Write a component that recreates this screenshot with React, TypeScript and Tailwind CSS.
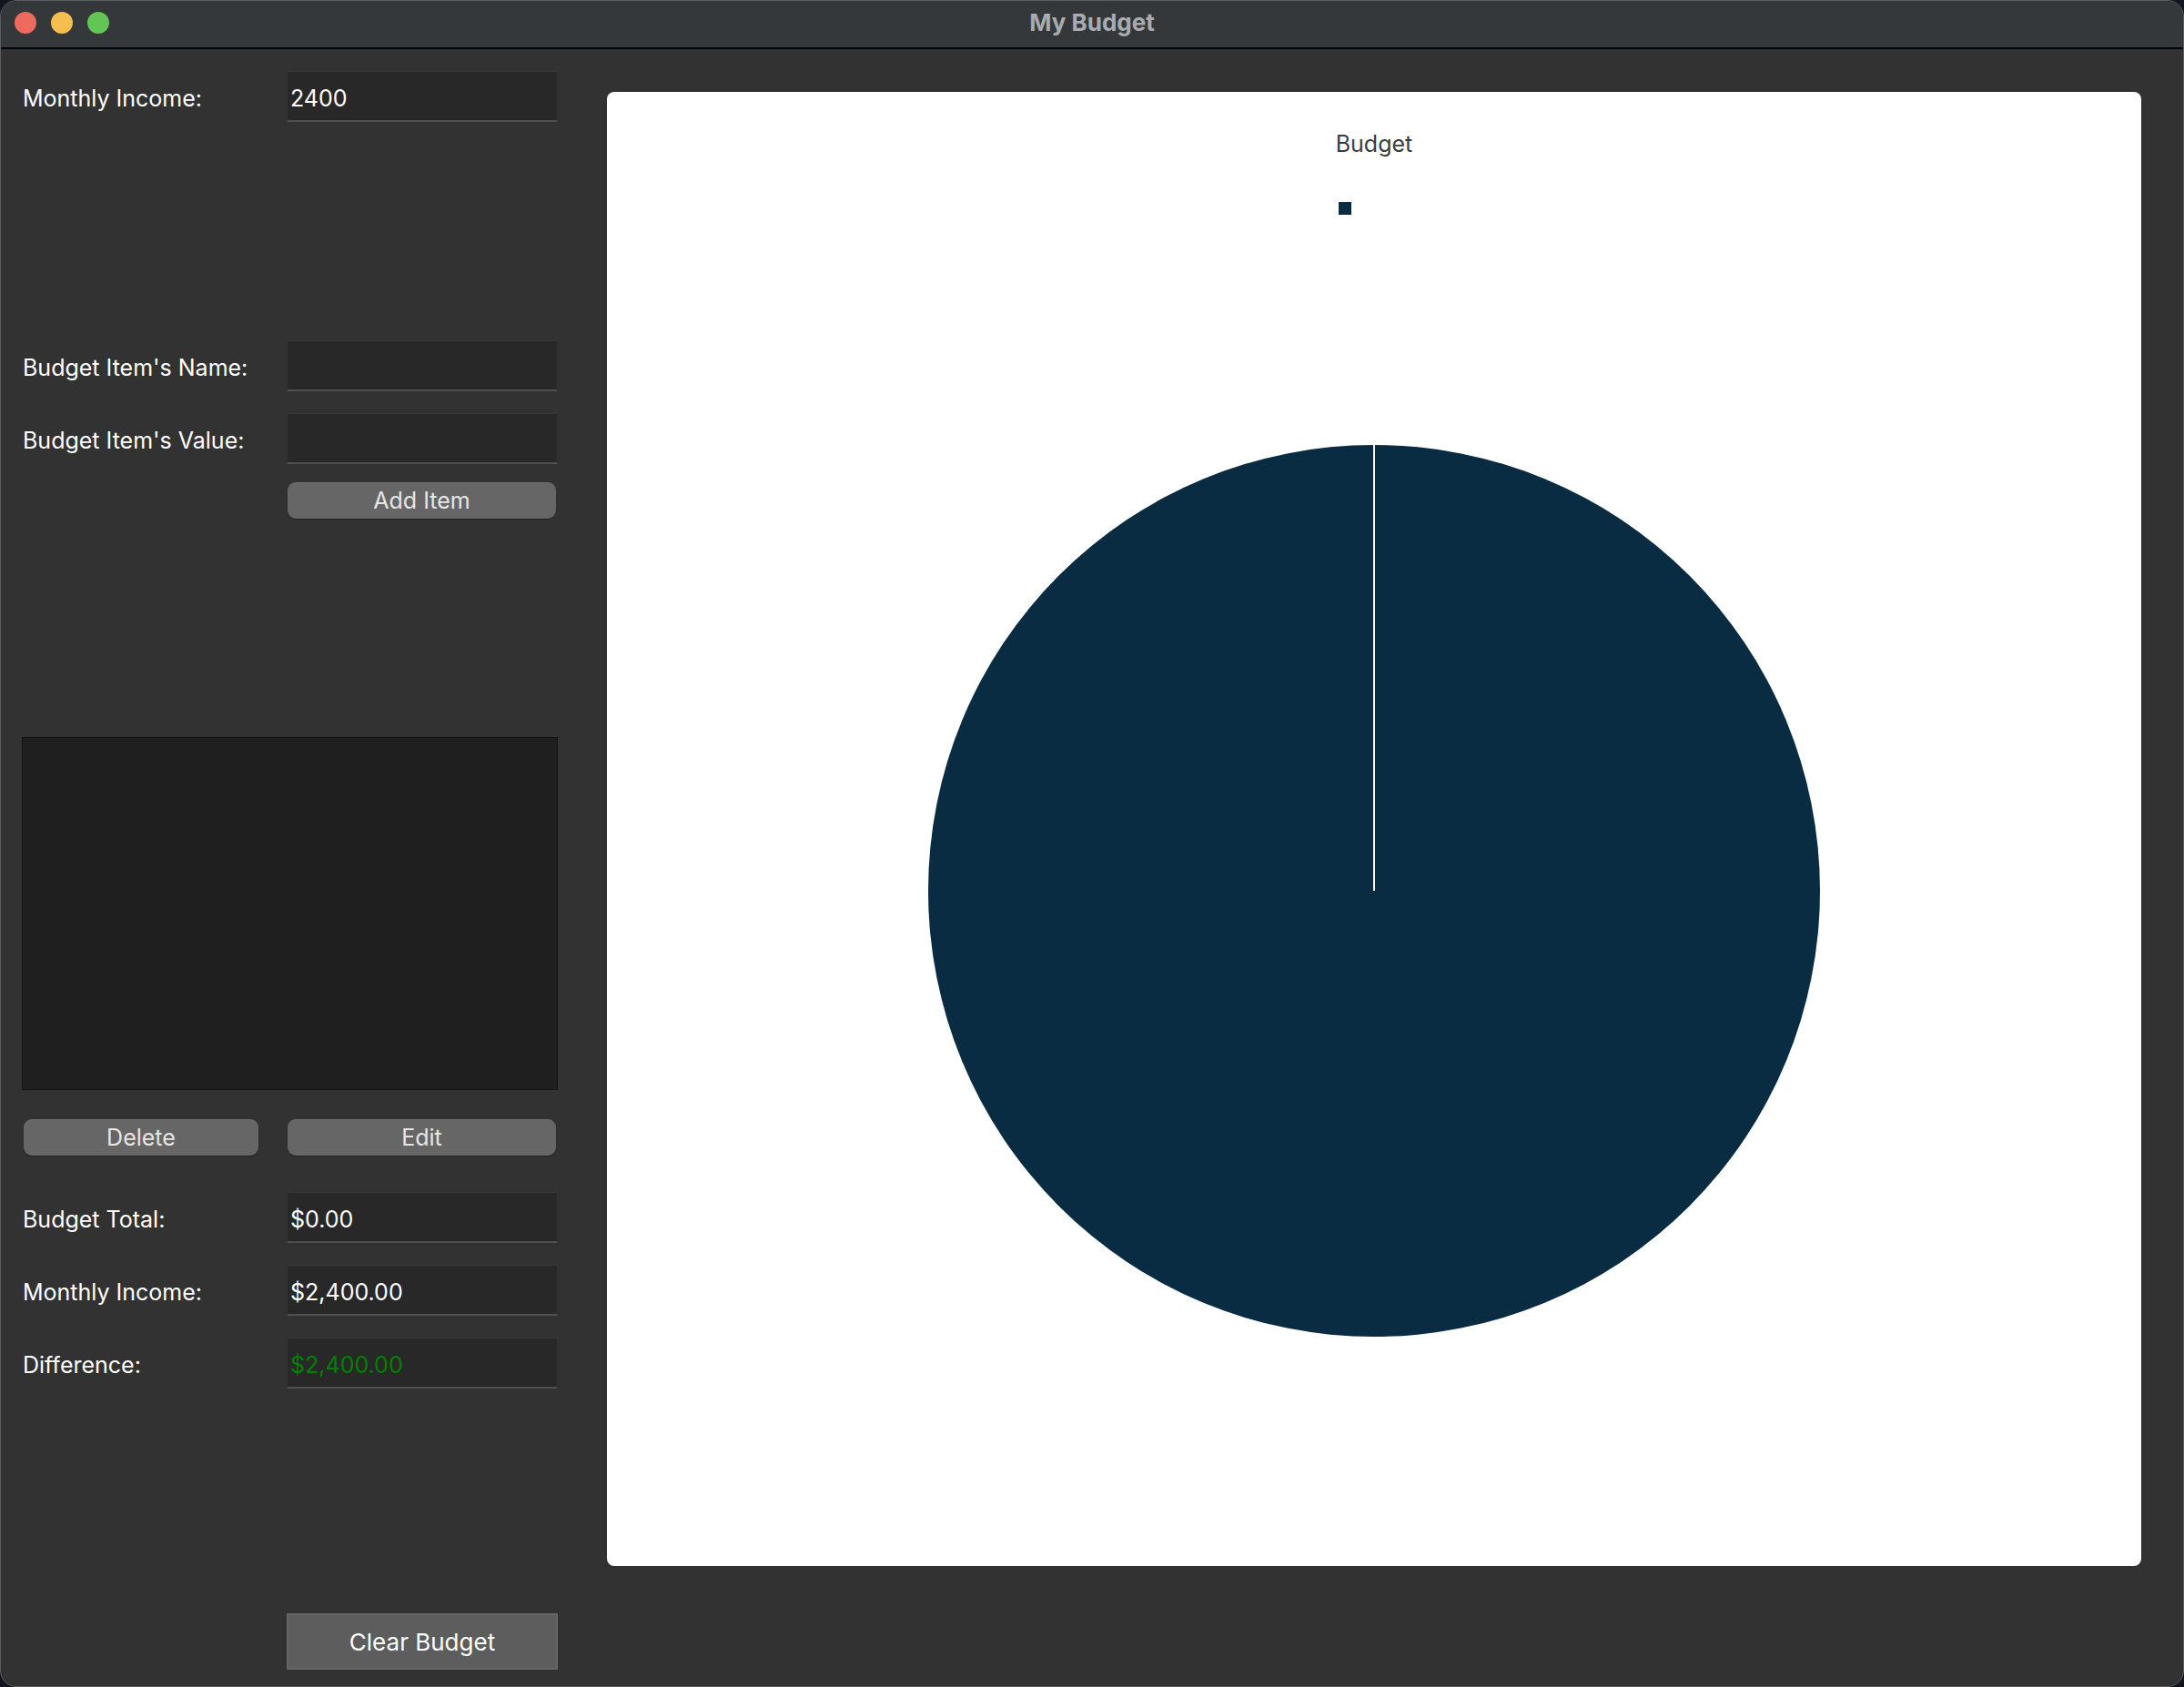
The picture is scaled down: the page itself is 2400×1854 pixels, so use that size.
import React from "react";

const font = { fontFamily: "Inter, 'Noto Sans', sans-serif" };

function Field({ label, value, valueClass = "text-white" }: { label: string; value?: string; valueClass?: string }) {
  return (
    <div className="flex items-center">
      <div className="w-[292px] pl-px pt-[6px] text-[25px] text-white">{label}</div>
      <div className="flex h-[56px] w-[296px] items-center border-t border-b-2 border-t-[#383838] border-b-[#505050] bg-[#282828] px-[3px] pt-[6px]">
        <span className={`text-[25px] ${valueClass}`}>{value}</span>
      </div>
    </div>
  );
}

function PillButton({ children, className = "" }: { children: React.ReactNode; className?: string }) {
  return (
    <button
      className={`flex h-[40px] items-center justify-center rounded-[9px] border-t border-[#707070] bg-[#666666] text-[25px] text-[#e6e6e6] shadow-[0_1px_1px_rgba(0,0,0,0.35)] ${className}`}
    >
      {children}
    </button>
  );
}

export default function App() {
  return (
    <div className="h-[1854px] w-[2400px] bg-[#11151f]" style={font}>
      <div className="flex h-full w-full flex-col overflow-hidden rounded-[18px] border border-[#5c5c5c] bg-[#323232]">
        <div className="relative flex h-[53px] shrink-0 items-center justify-center border-b-2 border-black bg-[#35383b] pb-[5px]">
          <div className="absolute left-[15px] top-[12px] flex gap-[16px]">
            <span className="h-[24px] w-[24px] rounded-full bg-[#ee6a5f]" />
            <span className="h-[24px] w-[24px] rounded-full bg-[#f5be4f]" />
            <span className="h-[24px] w-[24px] rounded-full bg-[#62c554]" />
          </div>
          <span className="text-[26px] font-bold text-[#a8abaf]">My Budget</span>
        </div>

        <div className="flex flex-1">
          <div className="flex w-[613px] shrink-0 flex-col pl-[23px] pt-[24px]">
            <Field label="Monthly Income:" value="2400" />
            <div className="mt-[240px]">
              <Field label="Budget Item's Name:" />
            </div>
            <div className="mt-[24px]">
              <Field label="Budget Item's Value:" />
            </div>
            <div className="mt-[20px] flex">
              <div className="w-[292px]" />
              <PillButton className="w-[295px]">Add Item</PillButton>
            </div>

            <div className="mt-[240px] h-[388px] w-[589px] border border-[#141414] bg-[#1f1f1f]" />

            <div className="mt-[32px] flex">
              <div className="w-[292px] pl-[2px]">
                <PillButton className="w-[258px]">Delete</PillButton>
              </div>
              <PillButton className="w-[295px]">Edit</PillButton>
            </div>

            <div className="mt-[40px]">
              <Field label="Budget Total:" value="$0.00" />
            </div>
            <div className="mt-[24px]">
              <Field label="Monthly Income:" value="$2,400.00" />
            </div>
            <div className="mt-[24px]">
              <Field label="Difference:" value="$2,400.00" valueClass="text-[#008000]" />
            </div>

            <div className="mt-[247px] flex">
              <div className="w-[291px]" />
              <button className="flex h-[62px] w-[298px] items-center justify-center border-2 border-[#676767] bg-[#5d5d5d] text-[26px] text-white">
                Clear Budget
              </button>
            </div>
          </div>

          <div className="ml-[53px] mt-[47px] flex h-[1620px] w-[1686px] flex-col items-center rounded-[8px] bg-white">
            <div className="mt-[40px] text-[25px] leading-[34px] text-[#3c3c3e]">Budget</div>
            <div className="mt-[47px] flex w-[78px]">
              <span className="h-[14px] w-[14px] bg-[#0a2c42]" />
            </div>
            <svg className="mt-[252px]" width="982" height="982" viewBox="0 0 982 982">
              <circle cx="491" cy="491" r="490" fill="#0a2c42" />
              <line x1="491" y1="0" x2="491" y2="491" stroke="#ffffff" strokeWidth="2" />
            </svg>
          </div>
        </div>
      </div>
    </div>
  );
}
